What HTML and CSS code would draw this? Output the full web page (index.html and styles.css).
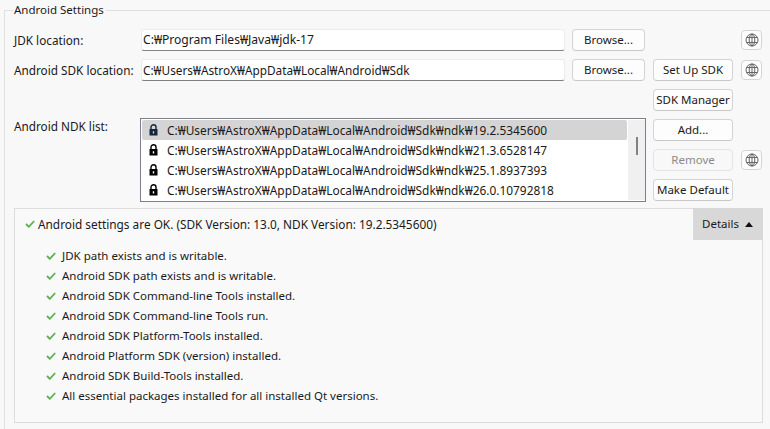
FILE: index.html
```html
<!DOCTYPE html>
<html lang="en">
<head>
<meta charset="utf-8">
<title>Android Settings</title>
<link rel="stylesheet" href="styles.css">
</head>
<body>
<svg class="defs" width="0" height="0" aria-hidden="true">
  <symbol id="globe" viewBox="0 0 14 14">
    <g fill="none" stroke="#666" stroke-width="1">
      <circle cx="7" cy="7" r="6"/>
      <ellipse cx="7" cy="7" rx="2.8" ry="6"/>
      <path d="M7 1v12M1.6 4.5h10.8M1.6 9.5h10.8"/>
    </g>
  </symbol>
  <symbol id="lock" viewBox="0 0 9 12">
    <path d="M2 5.5V3.2a2.5 2.5 0 0 1 5 0V5.5" fill="none" stroke="currentColor" stroke-width="1.4"/>
    <path d="M0.5 5h8v6.5h-8z M3.8 7.2v2.2h1.4V7.2z" fill="currentColor" fill-rule="evenodd"/>
  </symbol>
  <symbol id="check" viewBox="0 0 10 8">
    <path d="M1 4l2.8 2.8L9.2 1" fill="none" stroke="#5cb04f" stroke-width="1.8"/>
  </symbol>
</svg>
<fieldset class="group">
  <legend class="legend">Android Settings</legend>
  <div class="form">
    <label class="label">JDK location:</label>
    <div class="field jdk">C:₩Program Files₩Java₩jdk-17</div>
    <button class="btn">Browse...</button>
    <span></span>
    <button class="globe"><svg class="globe-ic"><use href="#globe"/></svg></button>

    <label class="label">Android SDK location:</label>
    <div class="field sdk">C:₩Users₩AstroX₩AppData₩Local₩Android₩Sdk</div>
    <button class="btn">Browse...</button>
    <button class="btn">Set Up SDK</button>
    <button class="globe"><svg class="globe-ic"><use href="#globe"/></svg></button>

    <button class="btn manager">SDK Manager</button>

    <label class="label ndk-label">Android NDK list:</label>
    <div class="list">
      <div class="items">
        <div class="item selected"><svg class="lock"><use href="#lock"/></svg>C:₩Users₩AstroX₩AppData₩Local₩Android₩Sdk₩ndk₩19.2.5345600</div>
        <div class="item"><svg class="lock"><use href="#lock"/></svg>C:₩Users₩AstroX₩AppData₩Local₩Android₩Sdk₩ndk₩21.3.6528147</div>
        <div class="item"><svg class="lock"><use href="#lock"/></svg>C:₩Users₩AstroX₩AppData₩Local₩Android₩Sdk₩ndk₩25.1.8937393</div>
        <div class="item"><svg class="lock"><use href="#lock"/></svg>C:₩Users₩AstroX₩AppData₩Local₩Android₩Sdk₩ndk₩26.0.10792818</div>
      </div>
      <div class="scrollbar"><div class="thumb"></div></div>
    </div>
    <button class="btn col4">Add...</button>
    <button class="btn col4" disabled>Remove</button>
    <button class="globe"><svg class="globe-ic"><use href="#globe"/></svg></button>
    <button class="btn col4">Make Default</button>
  </div>

  <section class="status">
    <div class="summary">
      <div class="summary-text"><svg class="check"><use href="#check"/></svg>Android settings are OK. (SDK Version: 13.0, NDK Version: 19.2.5345600)</div>
      <div class="details">Details <span class="arrow"></span></div>
    </div>
    <ul class="checks">
      <li><svg class="check"><use href="#check"/></svg>JDK path exists and is writable.</li>
      <li><svg class="check"><use href="#check"/></svg>Android SDK path exists and is writable.</li>
      <li><svg class="check"><use href="#check"/></svg>Android SDK Command-line Tools installed.</li>
      <li><svg class="check"><use href="#check"/></svg>Android SDK Command-line Tools run.</li>
      <li><svg class="check"><use href="#check"/></svg>Android SDK Platform-Tools installed.</li>
      <li><svg class="check"><use href="#check"/></svg>Android Platform SDK (version) installed.</li>
      <li><svg class="check"><use href="#check"/></svg>Android SDK Build-Tools installed.</li>
      <li><svg class="check"><use href="#check"/></svg>All essential packages installed for all installed Qt versions.</li>
    </ul>
  </section>
</fieldset>
</body>
</html>
```
FILE: styles.css
```css
* { box-sizing: border-box; }
html, body { height: 100%; }
body {
  margin: 0;
  overflow: hidden;
  background: #f8f8f8;
  color: #1a1a1a;
  font: 11.5px/20px "Noto Sans", "Noto Sans CJK KR", sans-serif;
}
.defs { display: block; height: 0; }
.group {
  margin: 4px -4px 0 4px;
  padding: 13px 11px 0 9px;
  border: 1px solid #e0e0e0;
  border-width: 1px 1px 0 1px;
  height: 440px;
  min-width: 0;
}
.legend { margin-left: -1px; padding: 0 2px 0 1px; line-height: 12px; height: 12px; }
.form {
  display: grid;
  grid-template-columns: 127px 424px 80px 88px 29px;
  grid-auto-rows: 22px;
  row-gap: 8px;
}
.label { font-size: 11.75px; line-height: 22px; white-space: nowrap; }
.field {
  background: #fff;
  border: 1px solid #ececec;
  border-bottom: 1px solid #808080;
  border-radius: 3px;
  padding: 0 1px;
  line-height: 20px;
  white-space: nowrap;
}
.jdk { font-size: 12.1px; }
.sdk { font-size: 11.8px; }
.btn {
  font: inherit;
  line-height: 18px;
  color: #1a1a1a;
  background: #fdfdfd;
  border: 1px solid #d4d4d4;
  border-bottom-color: #c8c8c8;
  border-radius: 4px;
  padding: 0;
  margin-left: 8px;
  white-space: nowrap;
}
.form > .field + .btn { margin-left: 7px; }
.col4, .manager { grid-column: 4; }
.btn[disabled] { background: #f8f8f8; color: #8a8a8a; border-color: #e4e4e4; }
.manager { grid-row: 3; }
.globe {
  margin: 1px 0 1px 8px;
  width: 21px;
  height: 20px;
  padding: 0;
  display: flex;
  align-items: center;
  justify-content: center;
  background: #fdfdfd;
  border: 1px solid #d4d4d4;
  border-radius: 4px;
  grid-column: 5;
}
.globe-ic { width: 14px; height: 14px; display: block; }
.ndk-label { grid-row: 4; grid-column: 1; line-height: 14px; }
.list {
  grid-row: 4 / 7;
  grid-column: 2 / 4;
  margin: -1px 0 -1px -1px;
  width: 506px;
  background: #fff;
  border: 1px solid #7a7f8a;
  display: flex;
  padding: 1px 0 1px 1px;
}
.items { width: 485px; flex: none; overflow: hidden; font-size: 11.9px; }
.item {
  height: 20px;
  line-height: 20px;
  display: flex;
  align-items: center;
  white-space: nowrap;
  padding-left: 6px;
  color: #1a1a1a;
}
.selected { background: #d4d4d4; border-radius: 2px; }
.lock { width: 9px; height: 12px; color: #000; margin-left: 1px; margin-right: 9px; flex: none; }
.selected .lock { color: #12263f; }
.scrollbar { flex: 1; background: #f0f0f0; margin-left: 1px; display: flex; justify-content: center; padding-top: 17px; }
.thumb { width: 2px; height: 18px; background: #828282; }
.status {
  margin-top: 7px;
  width: 749px;
  height: 215px;
  border: 1px solid #dcdcdc;
  background: #f9f9f9;
}
.summary { display: flex; justify-content: space-between; height: 31px; }
.summary-text { display: flex; align-items: center; padding: 0 0 2px 10px; white-space: nowrap; font-size: 11.83px; }
.summary-text .check { margin-right: 3px; }
.details {
  width: 70px;
  height: 32px;
  margin: -1px -1px 0 0;
  background: #d8d8d8;
  display: flex;
  align-items: center;
  padding-left: 9px;
  gap: 6px;
}
.arrow { width: 0; height: 0; border: 4.5px solid transparent; border-top: 0; border-bottom: 5px solid #111; }
.check { width: 10px; height: 8px; flex: none; }
.checks { list-style: none; margin: 6px 0 0; padding: 0 0 0 31px; }
.checks li { display: flex; align-items: center; height: 20px; white-space: nowrap; }
.checks .check { margin-right: 6px; }
```
